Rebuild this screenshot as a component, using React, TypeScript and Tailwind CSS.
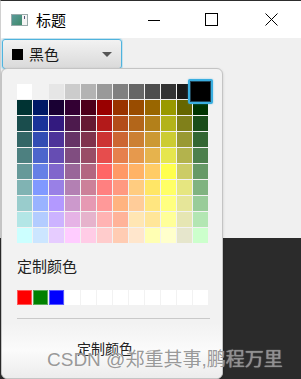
import React from "react";

// JavaFX-style colour palette: 12 columns x 10 rows
const RAW: number[] = [
  255, 255, 255, 242, 242, 242, 230, 230, 230, 204, 204, 204, 179, 179, 179, 153, 153, 153,
  128, 128, 128, 102, 102, 102, 77, 77, 77, 51, 51, 51, 26, 26, 26, 0, 0, 0,
  0, 51, 51, 0, 25, 102, 25, 0, 51, 51, 0, 51, 77, 0, 26, 153, 0, 0,
  153, 51, 0, 153, 76, 0, 153, 102, 0, 153, 153, 0, 102, 102, 0, 0, 51, 0,
  26, 77, 77, 26, 51, 153, 51, 26, 127, 77, 26, 77, 102, 26, 51, 179, 26, 26,
  179, 77, 26, 179, 102, 26, 179, 128, 26, 179, 179, 26, 128, 128, 26, 26, 77, 26,
  51, 102, 102, 51, 77, 179, 77, 51, 153, 102, 51, 102, 128, 51, 77, 204, 51, 51,
  204, 102, 51, 204, 128, 51, 204, 153, 51, 204, 204, 51, 153, 153, 51, 51, 102, 51,
  77, 128, 128, 77, 102, 204, 102, 77, 179, 128, 77, 128, 153, 77, 102, 230, 77, 77,
  230, 128, 77, 230, 153, 77, 230, 179, 77, 230, 230, 77, 179, 179, 77, 77, 128, 77,
  102, 153, 153, 102, 128, 230, 128, 102, 204, 153, 102, 153, 179, 102, 128, 255, 102, 102,
  255, 153, 102, 255, 179, 102, 255, 204, 102, 255, 255, 77, 204, 204, 102, 102, 153, 102,
  128, 179, 179, 128, 153, 255, 153, 128, 230, 179, 128, 179, 204, 128, 153, 255, 128, 128,
  255, 153, 128, 255, 204, 128, 255, 230, 102, 255, 255, 102, 230, 230, 128, 128, 179, 128,
  153, 204, 204, 153, 179, 255, 179, 153, 255, 204, 153, 204, 230, 153, 179, 255, 153, 153,
  255, 179, 128, 255, 204, 153, 255, 230, 128, 255, 255, 128, 230, 230, 153, 153, 204, 153,
  179, 230, 230, 179, 204, 255, 204, 179, 255, 230, 179, 230, 230, 179, 204, 255, 179, 179,
  255, 179, 153, 255, 230, 179, 255, 230, 153, 255, 255, 153, 230, 230, 179, 179, 230, 179,
  204, 255, 255, 204, 230, 255, 230, 204, 255, 255, 204, 255, 255, 204, 230, 255, 204, 204,
  255, 204, 179, 255, 230, 204, 255, 255, 179, 255, 255, 204, 230, 230, 204, 204, 255, 204,
];

const palette: string[] = [];
for (let i = 0; i < RAW.length; i += 3) {
  palette.push(`rgb(${RAW[i]}, ${RAW[i + 1]}, ${RAW[i + 2]})`);
}

const custom = ["#ff0000", "#008000", "#0000ff"];

function TitleBar() {
  return (
    <div className="flex h-[37px] items-center bg-white">
      {/* App icon */}
      <div className="ml-[10px] flex h-[12px] w-[17px] border border-[#9aa] bg-[#f4f4f4]">
        <div className="h-full w-[10px] bg-gradient-to-br from-[#5a9a9a] to-[#3f8a6a]" />
        <div className="ml-[2px] mt-[1px] h-[3px] w-px bg-[#557]" />
      </div>
      <span className="ml-[8px] text-[15px] leading-[20px] text-black">标题</span>
      <div className="flex-1" />
      <svg width="12" height="12" viewBox="0 0 12 12" className="mr-[45px]">
        <path d="M0 6.5h12" stroke="#000" strokeWidth="1" />
      </svg>
      <svg width="13" height="13" viewBox="0 0 13 13" className="mr-[47px]">
        <rect x="0.5" y="0.5" width="12" height="12" fill="none" stroke="#000" strokeWidth="1" />
      </svg>
      <svg width="13" height="13" viewBox="0 0 13 13" className="mr-[23px]">
        <path d="M0.5 0.5L12.5 12.5M12.5 0.5L0.5 12.5" stroke="#000" strokeWidth="1" />
      </svg>
    </div>
  );
}

function ComboButton() {
  return (
    <div className="ml-[1px] flex h-[30px] w-[120px] items-center rounded-[3px] border border-[#4fb3dd] bg-gradient-to-b from-[#f2f2f2] to-[#dadada] pl-[9px] pr-[9px] shadow-[0_0_0_1px_rgba(120,200,235,0.35)]">
      <div className="h-[11px] w-[11px] bg-black" />
      <span className="ml-[6px] text-[15px] leading-[20px] text-[#1a1a1a]">黑色</span>
      <div className="flex-1" />
      <svg width="10" height="5" viewBox="0 0 10 5">
        <path d="M0 0h10L5 5z" fill="#555" />
      </svg>
    </div>
  );
}

function ColorPopup() {
  return (
    <div className="absolute left-[1px] top-[68px] flex h-[311px] w-[222px] flex-col rounded-[6px] border border-[#c4c4c4] bg-[#f2f2f2] shadow-[0_1px_3px_rgba(0,0,0,0.15)]">
      <div className="px-[15px] pt-[15px]">
        <div className="relative">
          <div className="grid grid-cols-[repeat(12,15px)] gap-px">
            {palette.map((c, i) => (
              <div key={i} className="h-[15px] w-[15px]" style={{ backgroundColor: c }} />
            ))}
          </div>
          {/* Selected swatch */}
          <div className="absolute left-[171px] top-[-5px] h-[25px] w-[25px] rounded-[2px] border-2 border-[#3aaee0] bg-black shadow-[inset_0_0_0_1px_#1f4456,0_0_2px_rgba(58,174,224,0.6)]" />
        </div>

        <div className="mt-[13px] text-[15px] leading-[20px] text-[#222]">定制颜色</div>

        <div className="mt-[14px] grid grid-cols-[repeat(12,15px)] gap-px">
          {Array.from({ length: 12 }).map((_, i) => (
            <div
              key={i}
              className={
                i < 3
                  ? "h-[15px] w-[15px] shadow-[inset_0_0_0_1px_rgba(255,255,255,0.35)]"
                  : "h-[15px] w-[15px] bg-white"
              }
              style={i < 3 ? { backgroundColor: custom[i] } : undefined}
            />
          ))}
        </div>

        <div className="mt-[13px] h-px w-[193px] bg-[#c9c9c9]" />
      </div>

      <div className="mt-[4px] flex flex-1 justify-center rounded-b-[6px] bg-gradient-to-b from-[#f2f2f2] via-[#fbfbfb] to-[#ececec] pt-[15px]">
        <span className="mr-[14px] text-[14px] leading-[20px] text-[#222]">定制颜色</span>
      </div>
    </div>
  );
}

export default function App() {
  return (
    <div
      className="relative h-[379px] w-[301px] overflow-hidden bg-[#2b2b2b]"
      style={{ fontFamily: '"Noto Sans CJK SC", "Noto Sans", sans-serif' }}
    >
      <div className="border-t border-[#2d2d2d] border-l border-l-[#d0d0d0]">
        <TitleBar />
        <div className="h-[200px] bg-[#f0f0f0] pt-px">
          <ComboButton />
        </div>
      </div>

      <ColorPopup />

      {/* Watermark */}
      <div
        className="absolute left-[47px] top-[350px] whitespace-nowrap text-[19px] leading-[20px] text-[rgba(140,140,140,0.9)] [text-shadow:0_0_1px_rgba(255,255,255,0.7)]"
        style={{ fontFamily: '"Liberation Sans", "Noto Sans CJK SC", sans-serif' }}
      >
        CSDN @郑重其事,鹏程万里
      </div>
    </div>
  );
}
